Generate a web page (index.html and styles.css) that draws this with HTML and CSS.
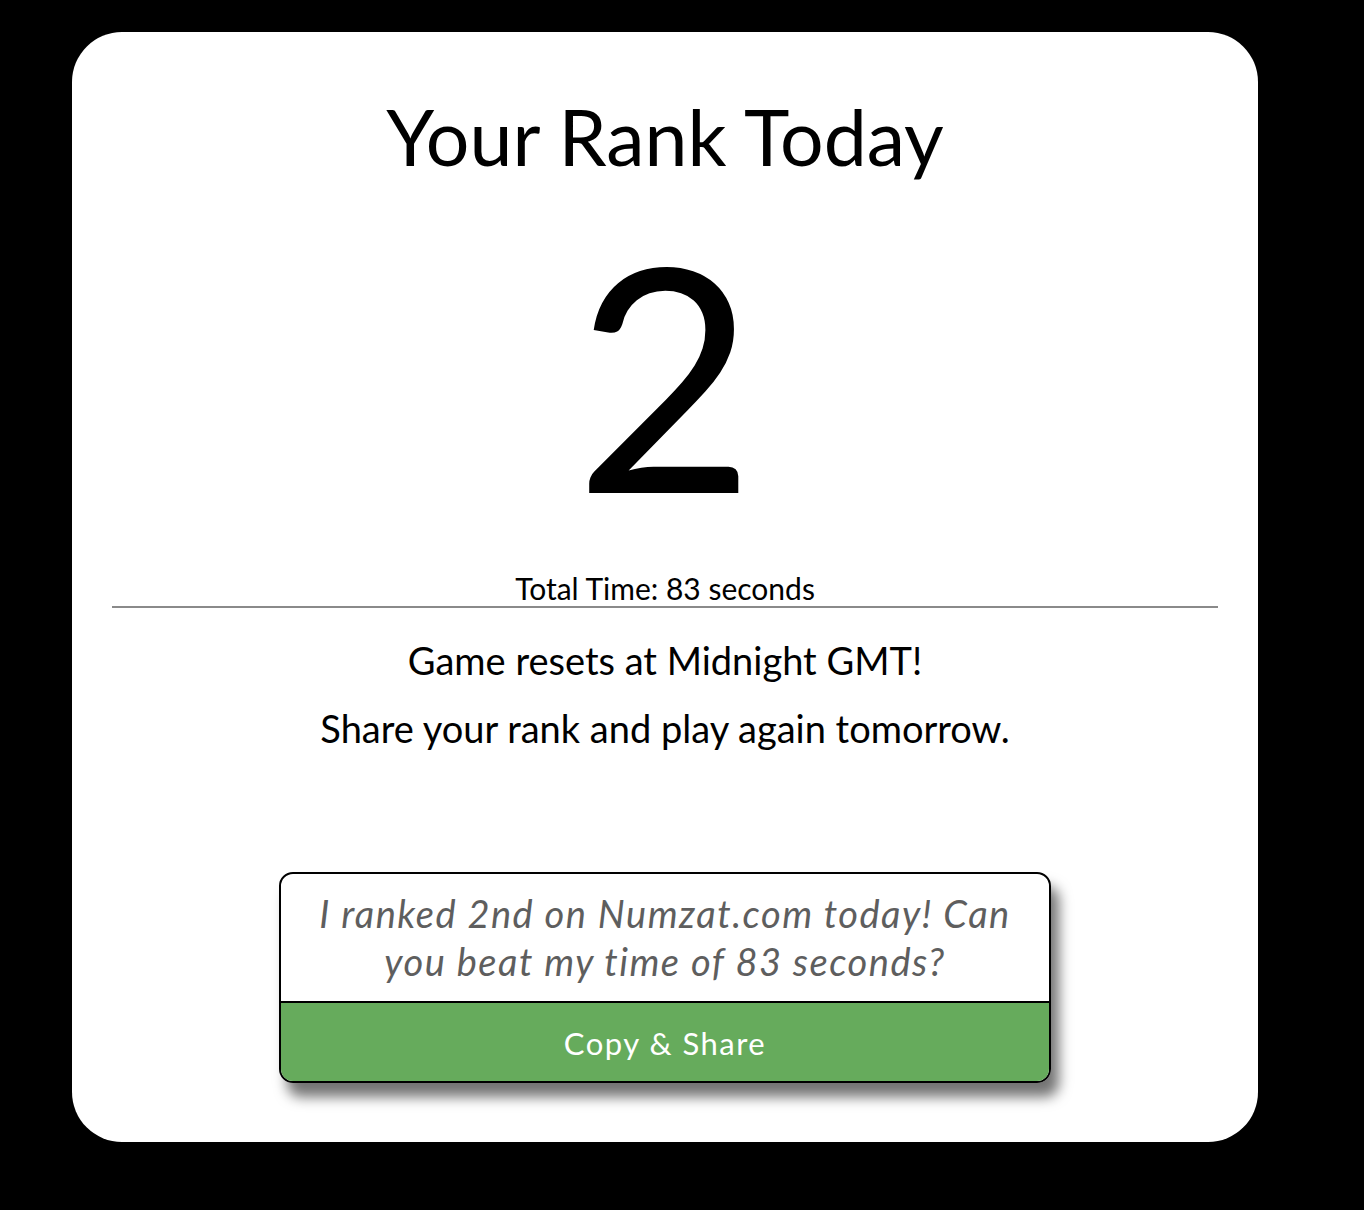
FILE: index.html
```html
<!DOCTYPE html>
<html>
<head>
<meta charset="utf-8">
<link rel="stylesheet" href="styles.css">
</head>
<body>
<div class="card">
  <h1 class="title">Your Rank Today</h1>
  <div class="rank">2</div>
  <div class="total">Total Time: 83 seconds</div>
  <hr class="rule">
  <p class="msg first">Game resets at Midnight GMT!</p>
  <p class="msg">Share your rank and play again tomorrow.</p>
  <div class="share">
    <div class="share-text">I ranked 2nd on Numzat.com today! Can you beat my time of 83 seconds?</div>
    <div class="share-btn">Copy &amp; Share</div>
  </div>
</div>
</body>
</html>
```

FILE: styles.css
```css
html, body {
  margin: 0;
  padding: 0;
  background: #000;
  height: 100%;
}
body {
  font-family: Lato, "Noto Sans", sans-serif;
  color: #000;
}
.card {
  box-sizing: border-box;
  margin: 32px 0 0 72px;
  width: 1186px;
  height: 1110px;
  background: #fff;
  border-radius: 50px;
  padding: 0 40px;
  display: flex;
  flex-direction: column;
  align-items: center;
}
.title {
  margin: 58px 0 0;
  font-weight: 400;
  font-size: 77px;
  line-height: 92px;
}
.rank {
  margin-top: 70px;
  font-size: 312px;
  line-height: 240px;
  font-weight: 400;
}
.total {
  margin-top: 80px;
  font-size: 30px;
  line-height: 32px;
}
.rule {
  align-self: stretch;
  margin: 2px 0 0;
  border: none;
  height: 2px;
  background: #8a8a8a;
}
.msg {
  margin: 0;
  font-size: 38px;
  line-height: 44px;
}
.msg.first {
  margin-top: 30px;
}
.msg + .msg {
  margin-top: 24px;
}
.share {
  margin-top: 122px;
  width: 772px;
  box-sizing: border-box;
  border: 2px solid #000;
  border-radius: 14px;
  overflow: hidden;
  box-shadow: 8px 14px 13px rgba(0,0,0,0.55);
}
.share-text {
  box-sizing: border-box;
  height: 129px;
  padding: 15px 30px 0;
  text-align: center;
  font-style: italic;
  color: #5e5e5e;
  font-size: 38px;
  letter-spacing: 1.5px;
  line-height: 48px;
  border-bottom: 2px solid #000;
}
.share-btn {
  background: #66ab5c;
  color: #fff;
  text-align: center;
  height: 78px;
  line-height: 80px;
  font-size: 31px;
  letter-spacing: 1.5px;
}
```
